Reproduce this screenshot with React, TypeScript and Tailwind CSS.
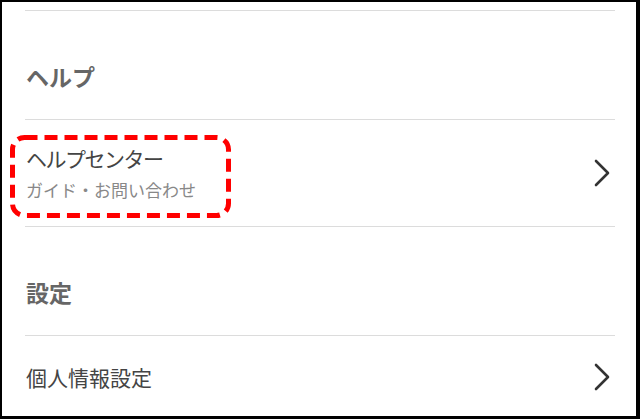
import React from "react";

const font = { fontFamily: '"Noto Sans CJK JP", "Noto Sans", sans-serif' };

function Chevron() {
  return (
    <svg width="16" height="28" viewBox="0 0 16 28" fill="none" className="shrink-0">
      <polyline
        points="2,2 14,14 2,26"
        stroke="#333333"
        strokeWidth="2.6"
        strokeLinecap="round"
        strokeLinejoin="round"
      />
    </svg>
  );
}

function SectionHeader({ label }: { label: string }) {
  return (
    <div className="border-t border-[#dcdcdc] pt-[49px] pb-[27px] pl-[1px]">
      <div className="text-[23px] leading-[32px] font-bold text-[#666666]">{label}</div>
    </div>
  );
}

export default function App() {
  return (
    <div
      className="w-[640px] h-[419px] overflow-hidden bg-white border-solid border-black border-t-2 border-l-2 border-r-4 border-b-[3px]"
      style={font}
    >
      <div className="ml-[23px] mr-[21px] mt-[8px]">
        <SectionHeader label="ヘルプ" />

        <div className="relative flex items-center justify-between border-t border-[#dcdcdc] pt-[24px] pb-[24px] pl-[1px] pr-[5px]">
          <div className="flex flex-col gap-[6px]">
            <div className="text-[21px] leading-[28px] tracking-[-1.5px] text-[#444444]">ヘルプセンター</div>
            <div className="text-[17px] leading-[24px] text-[#888888]">ガイド・お問い合わせ</div>
          </div>
          <Chevron />
          <svg
            className="absolute left-[-15px] top-[15px] pointer-events-none"
            width="221"
            height="83"
            viewBox="0 0 221 83"
            fill="none"
          >
            <rect
              x="2.5"
              y="2.5"
              width="216"
              height="78"
              rx="12"
              stroke="#ff0000"
              strokeWidth="5"
              strokeDasharray="13 7"
            />
          </svg>
        </div>

        <SectionHeader label="設定" />

        <div className="flex items-center justify-between border-t border-[#dcdcdc] pt-[27px] pb-[27px] pl-[1px] pr-[5px]">
          <div className="text-[21px] leading-[28px] text-[#444444]">個人情報設定</div>
          <Chevron />
        </div>
      </div>
    </div>
  );
}
